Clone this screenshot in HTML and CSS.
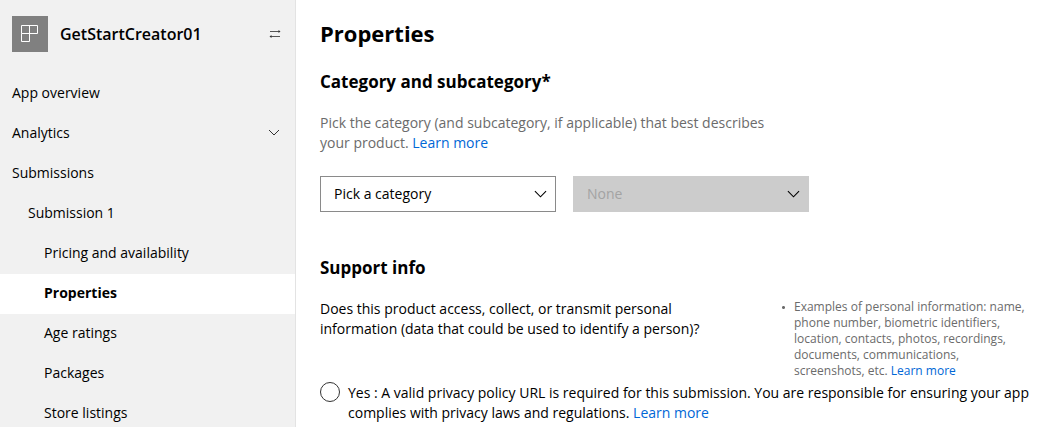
FILE: index.html
```html
<!DOCTYPE html>
<html lang="en">
<head>
<meta charset="utf-8">
<meta name="viewport" content="width=device-width, initial-scale=1">
<title>Properties - GetStartCreator01</title>
<link rel="stylesheet" href="styles.css">
</head>
<body>
<div class="layout">
  <aside class="sidebar">
    <div class="product">
      <svg class="product-logo" viewBox="0 0 36 36" aria-hidden="true">
        <rect width="36" height="36" fill="#808080"/>
        <path d="M9.5 9.5h16v8h-16zM9.5 17.5v8h8v-16" fill="none" stroke="#fff"/>
      </svg>
      <span class="product-name">GetStartCreator01</span>
      <button class="switch" type="button" aria-label="Switch product">
        <svg class="switch-icon" viewBox="0 0 12 10" aria-hidden="true">
          <path d="M1 2.5h10M1 7.5h10" fill="none" stroke="#555"/>
          <path d="M9.500 1l2 1.500-2 1.500zM2.500 6L.5 7.500l2 1.500z" fill="#333"/>
        </svg>
      </button>
    </div>
    <nav class="nav" aria-label="Product">
      <a class="nav-item" href="#">App overview</a>
      <a class="nav-item" href="#">Analytics
        <svg class="nav-chevron" viewBox="0 0 12 8" aria-hidden="true"><path d="M1 1l5 5 5-5" fill="none" stroke="#333"/></svg>
      </a>
      <a class="nav-item" href="#">Submissions</a>
      <a class="nav-item level-2" href="#">Submission 1</a>
      <a class="nav-item level-3" href="#">Pricing and availability</a>
      <a class="nav-item level-3 current" href="#" aria-current="page">Properties</a>
      <a class="nav-item level-3" href="#">Age ratings</a>
      <a class="nav-item level-3" href="#">Packages</a>
      <a class="nav-item level-3" href="#">Store listings</a>
    </nav>
  </aside>
  <main class="content">
    <h1 class="title">Properties</h1>
    <section class="category">
      <h2 class="heading">Category and subcategory*</h2>
      <p class="hint">Pick the category (and subcategory, if applicable) that best describes<br>your product. <a class="link" href="#">Learn more</a></p>
      <div class="pickers">
        <div class="picker">
          <select class="select" aria-label="Category"><option>Pick a category</option></select>
          <svg class="picker-chevron" viewBox="0 0 14 8" aria-hidden="true"><path d="M1 1l6 6 6-6" fill="none" stroke="#000" stroke-width="1.200"/></svg>
        </div>
        <div class="picker">
          <select class="select" aria-label="Subcategory" disabled><option>None</option></select>
          <svg class="picker-chevron" viewBox="0 0 14 8" aria-hidden="true"><path d="M1 1l6 6 6-6" fill="none" stroke="#000" stroke-width="1.200"/></svg>
        </div>
      </div>
    </section>
    <section class="support">
      <h2 class="heading">Support info</h2>
      <div class="question-row">
        <p class="question">Does this product access, collect, or transmit personal<br>information (data that could be used to identify a person)?</p>
        <ul class="examples">
          <li class="example">Examples of personal information: name,<br>phone number, biometric identifiers,<br>location, contacts, photos, recordings,<br>documents, communications,<br>screenshots, etc. <a class="link" href="#">Learn more</a></li>
        </ul>
      </div>
      <div class="answer">
        <input class="radio" type="radio" name="personal-info" id="answer-yes">
        <div class="answer-text">
          <label for="answer-yes">Yes : A valid privacy policy URL is required for this submission. You are responsible for ensuring your app complies with privacy laws and regulations.</label>
          <a class="link" href="#">Learn more</a>
        </div>
      </div>
    </section>
  </main>
</div>
</body>
</html>
```
FILE: styles.css
```css
* {
  box-sizing: border-box;
}

body {
  margin: 0;
  background: #fff;
  color: #000;
  font: 14px/20px "Open Sans", "Noto Sans", sans-serif;
}

.layout {
  display: flex;
  min-height: 100vh;
}

.sidebar {
  flex: 0 0 296px;
  background: #f1f1f1;
  border-right: 1px solid #e3e3e3;
}

.product {
  display: flex;
  align-items: center;
  gap: 12px;
  padding: 16px 14px 22px 12px;
}

.product-logo {
  width: 36px;
  height: 36px;
}

.product-name {
  flex: 1;
  font-size: 16px;
  font-weight: 600;
}

.switch {
  display: flex;
  padding: 0;
  border: 0;
  background: none;
}

.switch-icon {
  width: 12px;
  height: 10px;
}

.nav {
  display: flex;
  flex-direction: column;
}

.nav-item {
  display: flex;
  align-items: center;
  justify-content: space-between;
  height: 40px;
  padding: 0 15px 2px 12px;
  color: #000;
  text-decoration: none;
}

.nav-chevron {
  width: 12px;
  height: 8px;
}

.level-2 {
  padding-left: 28px;
}

.level-3 {
  padding-left: 44px;
}

.current {
  background: #fff;
  font-weight: 700;
}

.content {
  flex: 1;
  min-width: 0;
  padding: 19px 16px 0 24px;
}

.title {
  margin: 0;
  font-size: 22px;
  line-height: 28px;
  font-weight: 700;
}

.heading {
  margin: 0;
  font-size: 17px;
  line-height: 24px;
  font-weight: 700;
}

.category {
  margin-top: 23px;
}

.hint {
  margin: 19px 0 23px;
  color: #6b6b6b;
}

.link {
  color: #0067d6;
  text-decoration: none;
}

.pickers {
  display: flex;
  gap: 17px;
}

.picker {
  display: grid;
  align-items: center;
  width: 236px;
}

.select,
.picker-chevron {
  grid-area: 1 / 1;
}

.select {
  width: 100%;
  height: 36px;
  padding: 0 32px 0 13px;
  border: 1px solid #8a8a8a;
  border-radius: 0;
  background: #fff;
  color: #000;
  font: inherit;
  appearance: none;
}

.select:disabled {
  border-color: #ccc;
  background: #ccc;
  color: #a3a3a3;
  opacity: 1;
}

.picker-chevron {
  justify-self: end;
  width: 13px;
  height: 8px;
  margin-right: 9px;
  pointer-events: none;
}

.support {
  margin-top: 44px;
}

.question-row {
  display: flex;
  justify-content: space-between;
  margin-top: 19px;
}

.question {
  margin: 0;
}

.examples {
  flex: 0 0 253px;
  margin: 0;
  padding: 0;
  color: #6b6b6b;
  font-size: 12px;
  line-height: 16px;
  list-style: none;
}

.example {
  padding-left: 13px;
  background: radial-gradient(circle, #6b6b6b 1px, transparent 2px) 0 6px / 5px 5px no-repeat;
}

.answer {
  display: flex;
  gap: 8px;
  margin-top: 3px;
}

.answer-text {
  padding-top: 1px;
}

.radio {
  flex: none;
  width: 20px;
  height: 20px;
  margin: 0;
  border: 1px solid #333;
  border-radius: 50%;
  background: #fff;
  appearance: none;
}

.radio:checked {
  border-width: 6px;
}
```
